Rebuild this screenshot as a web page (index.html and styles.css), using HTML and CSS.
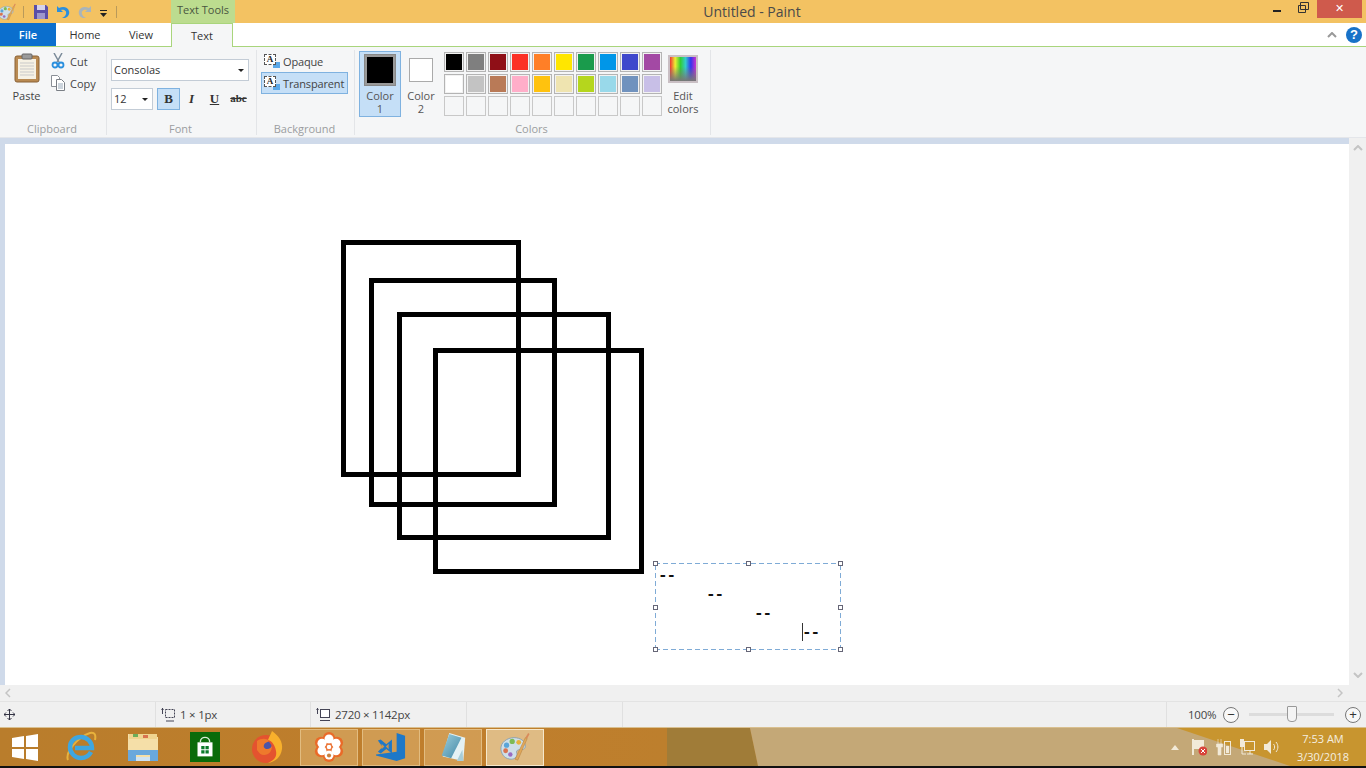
FILE: index.html
```html
<!DOCTYPE html>
<html lang="en">
<head>
<meta charset="utf-8">
<title>Untitled - Paint</title>
<link rel="stylesheet" href="styles.css">
</head>
<body>
<svg class="defs" width="0" height="0" aria-hidden="true">
  <symbol id="palette" viewBox="0 0 32 32">
    <path d="M1 19C0 11 8 6 15 6c7 0 12 4 12 9 0 4-4 4-7 4-2 0-3 2-2 4 1 3-2 6-6 6-6 0-10-4-11-10z" fill="#cfdfe8" stroke="#8ba2b2"/>
    <circle cx="7" cy="14" r="2.800" fill="#5aa5d8"/><circle cx="13" cy="10" r="2.800" fill="#7dbb55"/>
    <circle cx="20" cy="11" r="2.600" fill="#e8b23c"/><circle cx="6" cy="20" r="2.600" fill="#d9734f"/>
    <circle cx="11" cy="24" r="2.400" fill="#9a6cc0"/>
    <path d="M16 29L27 6l2 1-10 23z" fill="#e0a85a" stroke="#b07a3a" stroke-width=".5"/>
    <path d="M27 6l3-5 1.500 1-2.500 5z" fill="#d98a5a"/>
  </symbol>
</svg>

<header class="titlebar">
  <div class="qat">
    <svg class="qat-paint" viewBox="0 0 32 32"><use href="#palette"/></svg>
    <span class="qat-sep first"></span>
    <svg class="qat-btn" viewBox="0 0 14 14"><path d="M0 0h12l2 2v12H0z" fill="#5b4fa8"/><path d="M3 0h8v5H3z" fill="#d6d3ea"/><path d="M3 8h8v6H3z" fill="#9d97cc"/></svg>
    <svg class="qat-btn" viewBox="0 0 14 14"><path d="M1 1v6h6L5 5c3-1 6 1 5 4-.5 2-2 3-4 4h3c3-1 5-4 4-7-1-4-6-5-10-3z" fill="#2a8fde"/></svg>
    <svg class="qat-btn" viewBox="0 0 14 14"><path d="M13 1v6H7l2-2C6 4 3 6 4 9c.5 2 2 3 4 4H5C2 12 0 9 1 6c1-4 6-5 10-3z" fill="#a9b4bb"/></svg>
    <svg class="qat-drop" viewBox="0 0 7 7"><path d="M0 0h7v1H0zM0 3h7L3.500 7z" fill="#222"/></svg>
    <span class="qat-sep last"></span>
  </div>
  <div class="tools-label">Text Tools</div>
  <div class="wintitle">Untitled - Paint</div>
  <div class="winctl">
    <span class="ctl-min"></span>
    <svg class="ctl-max" viewBox="0 0 11 11"><path d="M2.500 .5h8v7h-8zM.5 3.500h7v7h-7z" fill="#f3c262" stroke="#333"/></svg>
    <span class="ctl-close">✕</span>
  </div>
</header>

<nav class="tabs">
  <span class="tab-file">File</span>
  <span class="tab tab-home">Home</span>
  <span class="tab tab-view">View</span>
  <span class="tab-text">Text</span>
  <span class="tabs-fill"></span>
  <svg class="collapse" viewBox="0 0 10 6"><path d="M1 5l4-4 4 4" fill="none" stroke="#999" stroke-width="2"/></svg>
  <span class="help">?</span>
</nav>

<section class="ribbon">
  <div class="group g-clip">
    <div class="body clip-body">
      <div class="paste">
        <svg class="paste-icon" viewBox="0 0 26 30"><rect x="1" y="3" width="24" height="26" rx="2" fill="#b98a52" stroke="#8a6236"/><rect x="4" y="6" width="18" height="20" fill="#f6f1e4"/><path d="M6 10h14M6 13h14M6 16h14M6 19h14M6 22h14" stroke="#c9c9c9"/><rect x="8" y="1" width="10" height="5" rx="1" fill="#9a9a9a" stroke="#666"/></svg>
        <span>Paste</span>
      </div>
      <div class="clip-side">
        <div class="clip-row">
          <svg class="clip-icon" viewBox="0 0 14 16"><path d="M3 0l5 9M11 0L6 9" stroke="#7a8a99" stroke-width="1.500"/><circle cx="4" cy="12" r="2.500" fill="none" stroke="#2a8fde" stroke-width="1.800"/><circle cx="10" cy="12" r="2.500" fill="none" stroke="#2a8fde" stroke-width="1.800"/></svg>
          <span>Cut</span>
        </div>
        <div class="clip-row">
          <svg class="clip-icon" viewBox="0 0 14 16"><path d="M.5.5h6l2 2v9h-8z" fill="#fff" stroke="#8a8f96"/><path d="M5.500 4.500h5l3 3v8h-8z" fill="#fff" stroke="#7a7f86"/><path d="M7 9h5M7 11h5M7 13h5" stroke="#9ab"/></svg>
          <span>Copy</span>
        </div>
      </div>
    </div>
    <div class="label">Clipboard</div>
  </div>

  <div class="group g-font">
    <div class="body font-body">
      <div class="combo combo-font"><span>Consolas</span><i class="caret"></i></div>
      <div class="font-row">
        <div class="combo combo-size"><span>12</span><i class="caret"></i></div>
        <span class="fbtn on serif-b">B</span>
        <span class="fbtn serif-i">I</span>
        <span class="fbtn serif-u">U</span>
        <span class="fbtn serif-s">abc</span>
      </div>
    </div>
    <div class="label">Font</div>
  </div>

  <div class="group g-bg">
    <div class="body bg-body">
      <div class="bg-row"><span class="bg-icon"><span class="bg-a">A</span></span><span>Opaque</span></div>
      <div class="bg-row on"><span class="bg-icon"><span class="bg-a">A</span></span><span>Transparent</span></div>
    </div>
    <div class="label">Background</div>
  </div>

  <div class="group g-colors">
    <div class="body colors-body">
      <div class="cbtn c1"><span class="swatch big"></span><span class="ctext">Color<br>1</span></div>
      <div class="cbtn c2"><span class="swatch small"></span><span class="ctext">Color<br>2</span></div>
      <div class="palette">
        <i style="--c:#000"></i><i style="--c:#7f7f7f"></i><i style="--c:#8f0f17"></i><i style="--c:#fb3026"></i><i style="--c:#ff7f27"></i><i style="--c:#ffe600"></i><i style="--c:#1a9b4c"></i><i style="--c:#0096e8"></i><i style="--c:#3f48cc"></i><i style="--c:#a349a4"></i>
        <i style="--c:#fff"></i><i style="--c:#c3c3c3"></i><i style="--c:#b97a57"></i><i style="--c:#ffaec9"></i><i style="--c:#ffc20e"></i><i style="--c:#efe4b0"></i><i style="--c:#b5d61d"></i><i style="--c:#99d9ea"></i><i style="--c:#7092be"></i><i style="--c:#c8bfe7"></i>
        <b></b><b></b><b></b><b></b><b></b><b></b><b></b><b></b><b></b><b></b>
      </div>
      <div class="cbtn edit"><span class="rainbow"></span><span class="ctext">Edit<br>colors</span></div>
    </div>
    <div class="label">Colors</div>
  </div>
</section>

<main class="workspace">
  <div class="canvas-wrap">
    <div class="canvas">
      <div class="sq s1"></div>
      <div class="sq s2"></div>
      <div class="sq s3"></div>
      <div class="sq s4"></div>
      <div class="textbox">
        <pre class="typed">--
	--
		--
			--</pre>
        <span class="cursor"></span>
        <i class="h tl"></i><i class="h tm"></i><i class="h tr"></i>
        <i class="h ml"></i><i class="h mr"></i>
        <i class="h bl"></i><i class="h bm"></i><i class="h br"></i>
      </div>
    </div>
  </div>
  <aside class="vscroll">
    <svg class="up" viewBox="0 0 10 6"><path d="M1 5l4-4 4 4" fill="none" stroke="#c4c4c4" stroke-width="2"/></svg>
    <svg class="up" viewBox="0 0 10 6"><path d="M1 1l4 4 4-4" fill="none" stroke="#c4c4c4" stroke-width="2"/></svg>
  </aside>
</main>

<div class="hscroll">
  <svg class="hs" viewBox="0 0 6 10"><path d="M5 1L1 5l4 4" fill="none" stroke="#c4c4c4" stroke-width="1.500"/></svg>
  <svg class="hs" viewBox="0 0 6 10"><path d="M1 1l4 4-4 4" fill="none" stroke="#c4c4c4" stroke-width="1.500"/></svg>
</div>

<footer class="status">
  <div class="cell c-pos"><svg class="move" viewBox="0 0 11 11"><path d="M5.500 0v11M0 5.500h11M3.500 2l2-2 2 2M3.500 9l2 2 2-2M2 3.500l-2 2 2 2M9 3.500l2 2-2 2" fill="none" stroke="#334"/></svg></div>
  <div class="cell c-sel"><svg class="dim" viewBox="0 0 14 14"><path d="M1.500 0v6" stroke="#445"/><path d="M0 2l1.500-2L3 2z" fill="#445"/><rect x="4.500" y="1.500" width="9" height="8" fill="none" stroke="#445" stroke-dasharray="2 1"/><path d="M5 13h8" stroke="#445"/></svg><span>1 × 1px</span></div>
  <div class="cell c-size"><svg class="dim" viewBox="0 0 14 14"><path d="M1.500 0v6" stroke="#445"/><path d="M0 2l1.500-2L3 2z" fill="#445"/><rect x="4.500" y="1.500" width="9" height="8" fill="#fff" stroke="#445"/><path d="M4 12.500h10" stroke="#445"/></svg><span>2720 × 1142px</span></div>
  <div class="cell c-a"></div>
  <div class="cell c-b"></div>
  <div class="zoombox">
    <span class="pct">100%</span>
    <span class="zbtn">−</span>
    <div class="slider"><i class="thumb"></i></div>
    <span class="zbtn">+</span>
  </div>
</footer>

<div class="taskbar">
  <svg class="wall" viewBox="0 0 1366 39" preserveAspectRatio="none">
    <defs>
      <linearGradient id="wallL" x1="0" x2="1" y1="0" y2="0"><stop offset="0" stop-color="#b97d2c"/><stop offset=".7" stop-color="#c07e2c"/><stop offset="1" stop-color="#bd7f2d"/></linearGradient>
    </defs>
    <rect x="0" y="0" width="667" height="39" fill="url(#wallL)"/>
    <polygon points="667,0 750,0 758,39 667,39" fill="#a07c38"/>
    <polygon points="750,0 1366,0 1366,39 758,39" fill="#c4a877"/>
    <polygon points="1177,0 1366,0 1366,39 1290,39" fill="#c8952f"/>
  </svg>
  <div class="slot start"><svg class="win" viewBox="0 0 26 27"><path d="M0 4l12-2v11H0zM14 2l12-2v13H14zM0 15h12v10L0 23zM14 15h12v12l-12-2z" fill="#fff"/></svg></div>
  <div class="slot"><svg class="ico-l" viewBox="0 0 32 32"><path d="M3 29C0 22 12 6 25 2c5-1 6 2 5 7" fill="none" stroke="#e8b23c" stroke-width="2"/><path d="M26 21c-2 4-6 6-10 6-6 0-11-5-11-11S10 6 16 6s11 5 11 11H10" fill="none" stroke="#3fa6e0" stroke-width="4.500"/></svg></div>
  <div class="slot"><svg class="ico-l" viewBox="0 0 32 32"><path d="M1 3h13l2 3h15v22H1z" fill="#f5dfa8"/><path d="M2 3h28v5H2z" fill="#efd48f"/><rect x="6" y="3" width="5" height="3" fill="#6cae5a"/><rect x="16" y="4" width="5" height="3" fill="#d9734f"/><path d="M1 19h30v11h-8v-6H9v6H1z" fill="#6aa8dc"/><rect x="9" y="26" width="14" height="4" fill="#cfe3f3"/></svg></div>
  <div class="slot"><svg class="ico" viewBox="0 0 32 32"><rect width="32" height="32" fill="#0a6b0a"/><path d="M8 11h16v15H8z" fill="#fff"/><path d="M11 11c0-7 10-7 10 0" fill="none" stroke="#d8ecd8" stroke-width="1.500"/><path d="M12 15h3.500v3.500H12zM16.500 15H20v3.500h-3.500zM12 19.500h3.500V23H12zM16.500 19.500H20V23h-3.500z" fill="#0a7a2a"/></svg></div>
  <div class="slot"><svg class="ico-l" viewBox="0 0 32 32"><circle cx="15" cy="18" r="14" fill="#e4532f"/><path d="M21 0c7 5 11 11 10 18-1 8-7 13-14 14 7-3 9-7 8-12-1-6-4-10-8-11 1-3 3-6 4-9z" fill="#f8b02c"/><circle cx="14" cy="16" r="6.500" fill="#4a55a8"/><path d="M6 10c4-3 10-3 12 0-2 2-4 1-5 4-1 2 1 4 3 4 3 0 4-2 5-3 0 5-3 9-8 9-3 0-5-2-7-5z" fill="#ee7a2c"/></svg></div>
  <div class="tbtn"><svg class="ico" viewBox="0 0 32 32"><g fill="#ea6a28"><circle cx="16" cy="16" r="11"/><circle cx="16" cy="6.500" r="6.500"/><circle cx="7.500" cy="11.500" r="6.500"/><circle cx="24.500" cy="11.500" r="6.500"/><circle cx="7.500" cy="20.500" r="6.500"/><circle cx="24.500" cy="20.500" r="6.500"/><circle cx="16" cy="25.500" r="6.500"/></g><g fill="#fff"><circle cx="16" cy="7.500" r="4.800"/><circle cx="8.500" cy="12" r="4.800"/><circle cx="23.500" cy="12" r="4.800"/><circle cx="8.500" cy="20" r="4.800"/><circle cx="23.500" cy="20" r="4.800"/><circle cx="16" cy="24.500" r="4.800"/></g><circle cx="16" cy="16" r="3" fill="#fff" stroke="#ea6a28"/><circle cx="16" cy="25" r="2.200" fill="#c8803e"/></svg></div>
  <div class="tbtn"><svg class="ico" viewBox="0 0 32 32"><path d="M22 1l9 3v24l-9 3L0 25v-1l22-3V5z" fill="#1e78c8"/><path d="M2 9l3-1 6 5 6-5v15l-6-5-6 5-3-2 5-5z" fill="#1e78c8"/><path d="M6 12.500v6l3-3zM13.500 12.500l-3 3 3 3z" fill="#c8954e"/></svg></div>
  <div class="tbtn"><svg class="ico" viewBox="0 0 32 32"><defs><linearGradient id="pad" x1="0" x2="1" y1="0" y2="1"><stop offset="0" stop-color="#9fd0dc"/><stop offset="1" stop-color="#3f86a6"/></linearGradient></defs><path d="M12 1l17 5-2 25-22-5z" fill="#e4f1f4"/><path d="M12 2l13 4-11 22-10-3z" fill="url(#pad)"/><path d="M20 31l6-12 1 12z" fill="#a8cdd8"/></svg></div>
  <div class="tbtn active"><svg class="ico" viewBox="0 0 32 32"><use href="#palette"/></svg></div>
  <div class="tray">
    <svg class="t-up" viewBox="0 0 8 5"><path d="M0 5l4-5 4 5z" fill="#f2ead8"/></svg>
    <svg class="t-i" viewBox="0 0 16 18"><path d="M2 1v16" stroke="#f2ead8" stroke-width="2"/><path d="M3 2h10v9H3z" fill="#f2ead8"/><circle cx="12" cy="13" r="4.500" fill="#d9433a"/><path d="M10 11l4 4M14 11l-4 4" stroke="#fff"/></svg>
    <svg class="t-i" viewBox="0 0 16 18"><path d="M3 1v5M6 1v5M1.500 6h6v3h-1.500v8h-3V9h-1.500z" fill="#f2ead8" stroke="#f2ead8" stroke-width=".6"/><rect x="9.500" y="3.500" width="6" height="13" fill="none" stroke="#f2ead8"/><rect x="11" y="8" width="3" height="7" fill="#f2ead8"/></svg>
    <svg class="t-i" viewBox="0 0 16 18"><rect x="5.500" y="3.500" width="10" height="9" fill="none" stroke="#f2ead8"/><path d="M8 16h6M11 12v4" stroke="#f2ead8"/><rect x="1" y="1" width="4" height="8" fill="#f2ead8"/><path d="M3 9v7h4" fill="none" stroke="#f2ead8"/></svg>
    <svg class="t-i" viewBox="0 0 16 18"><path d="M1 6h3l4-4v14l-4-4H1z" fill="#f2ead8"/><path d="M10.500 6c1.500 1.500 1.500 4.500 0 6M13 4c2.500 3 2.500 7 0 10" fill="none" stroke="#f2ead8"/></svg>
    <div class="clock"><span>7:53 AM</span><span>3/30/2018</span></div>
  </div>
</div>
</body>
</html>
```

FILE: styles.css
```css
* { box-sizing: border-box; }
html, body { margin: 0; padding: 0; }
body {
  width: 1366px;
  height: 768px;
  overflow: hidden;
  font-family: "Open Sans", "Noto Sans", sans-serif;
  font-size: 11px;
  color: #444;
  background: #fff;
  display: flex;
  flex-direction: column;
}
.defs { display: block; height: 0; }

/* title bar */
.titlebar { height: 23px; background: #f3c262; display: flex; flex: none; }
.qat { width: 171px; display: flex; align-items: center; flex: none; }
.qat-paint { width: 18px; height: 18px; margin-left: -2px; }
.qat-sep { width: 1px; height: 12px; background: #b99a5a; }
.qat-sep.first { margin-left: 7px; margin-right: 10px; }
.qat-sep.last { margin-left: 9px; }
.qat-btn { width: 14px; height: 14px; margin-right: 8px; }
.qat-drop { width: 7px; height: 7px; margin-top: 3px; }
.tools-label { width: 64px; flex: none; background: #bcdc8f; color: #49553f; text-align: center; line-height: 20px; font-size: 11px; }
.wintitle { flex: 1; text-align: center; font-size: 14px; line-height: 24px; color: #4a4a4a; }
.winctl { width: 97px; flex: none; height: 18px; display: flex; align-items: center; }
.ctl-min { width: 8px; height: 2px; background: #222; margin-left: 4px; margin-top: 3px; }
.ctl-max { width: 11px; height: 11px; margin-left: 17px; margin-top: -4px; }
.ctl-close { width: 45px; height: 18px; margin-left: 8px; background: #cf5a4c; color: #fff; text-align: center; font: bold 11px/18px "DejaVu Sans", sans-serif; }

/* tabs */
.tabs { height: 24px; flex: none; display: flex; background: #fff; border-bottom: 1px solid #a9d57c; align-items: center; color: #333; }
.tab-file { width: 56px; height: 23px; background: #0b6fce; color: #fff; text-align: center; line-height: 24px; font-weight: 600; }
.tab { text-align: center; line-height: 25px; }
.tab-home { width: 58px; }
.tab-view { width: 54px; margin-right: 3px; }
.tab-text { width: 62px; height: 24px; margin-bottom: -1px; background: #f5f6f7; border: 1px solid #a9d57c; border-bottom: 0; text-align: center; line-height: 24px; }
.tabs-fill { flex: 1; }
.collapse { width: 10px; height: 6px; margin-right: 9px; }
.help { width: 16px; height: 16px; border-radius: 50%; background: #1872c8; color: #fff; font: bold 13px/16px "Liberation Sans", sans-serif; text-align: center; margin-right: 4px; }

/* ribbon */
.ribbon { height: 91px; flex: none; display: flex; background: #f5f6f7; padding-top: 3px; border-bottom: 1px solid #e4e6ea; }
.group { display: flex; flex-direction: column; height: 85px; border-right: 1px solid #e3e5e8; flex: none; }
.g-clip { width: 107px; }
.g-font { width: 150px; }
.g-bg { width: 98px; }
.g-colors { width: 356px; }
.body { height: 71px; flex: none; }
.label { text-align: center; color: #9b9da0; line-height: 16px; padding-right: 2px; }

.clip-body { display: flex; padding-left: 10px; }
.paste { width: 33px; display: flex; flex-direction: column; align-items: center; }
.paste-icon { width: 26px; height: 30px; margin-top: 3px; }
.paste span { margin-top: 5px; line-height: 15px; }
.clip-side { margin-left: 8px; }
.clip-row { height: 22px; display: flex; align-items: center; gap: 5px; }
.clip-icon { width: 14px; height: 16px; }

.font-body { padding: 9px 0 0 4px; }
.combo { height: 22px; background: #fff; border: 1px solid #c3ccd6; display: flex; align-items: center; justify-content: space-between; padding: 0 4px 2px 2px; color: #333; }
.combo-font { width: 138px; }
.combo-size { width: 42px; }
.caret { width: 0; height: 0; border: 3px solid transparent; border-top: 3px solid #222; border-bottom: 0; margin-top: 2px; }
.font-row { display: flex; margin-top: 7px; }
.combo-size { margin-right: 4px; }
.fbtn { width: 23px; height: 22px; text-align: center; line-height: 21px; font-family: "Liberation Serif", serif; font-size: 13px; color: #333; font-weight: bold; }
.fbtn.on { background: #c5dff7; border: 1px solid #7fb2e0; line-height: 19px; }
.serif-i { font-style: italic; }
.serif-u { text-decoration: underline; }
.serif-s { text-decoration: line-through; font-size: 11px; margin-left: 1px; }

.bg-body { padding-left: 4px; }
.bg-row { height: 22px; width: 87px; display: flex; align-items: center; gap: 3px; padding-left: 2px; border: 1px solid transparent; letter-spacing: -.15px; }
.bg-row.on { background: #c5dff7; border-color: #7fb2e0; }
.bg-icon { width: 16px; height: 14px; flex: none; position: relative; background: linear-gradient(#5ba8e8, #5ba8e8) right bottom / 7px 6px no-repeat; }
.bg-a { display: block; width: 12px; height: 11px; background: #fff; border: 1px dashed #555; font: bold 9px/9px "Liberation Serif", serif; text-align: center; color: #222; }

.colors-body { display: flex; padding: 1px 0 0 4px; }
.cbtn { display: flex; flex-direction: column; align-items: center; flex: none; height: 66px; }
.c1 { width: 42px; background: #c5dff7; border: 1px solid #7fb2e0; }
.c2 { width: 40px; }
.edit { width: 40px; margin-left: 1px; }
.ctext { text-align: center; line-height: 13px; color: #555; }
.swatch { display: block; border: 1px solid #888; flex: none; }
.swatch.big { width: 32px; height: 32px; background: #000; box-shadow: inset 0 0 0 2px #999; margin-top: 2px; margin-bottom: 3px; }
.swatch.small { width: 24px; height: 24px; background: #fff; margin-top: 7px; margin-bottom: 7px; border-color: #aaa; }
.palette { display: grid; grid-template-columns: repeat(10, 20px); grid-auto-rows: 20px; gap: 2px; margin: 1px 0 0 3px; flex: none; align-content: start; }
.palette i { display: block; border: 1px solid #b4b4b4; background: var(--c); box-shadow: inset 0 0 0 1px #f2f2f2; }
.palette b { display: block; border: 1px solid #c8c8c8; background: #f5f6f7; }
.rainbow { width: 30px; height: 28px; margin-top: 4px; margin-bottom: 6px; flex: none; border: 2px solid #c9bfc4; background: linear-gradient(to bottom, transparent 40%, #777), linear-gradient(to right, #e33, #ee3, #3c3, #3cc, #33e, #c3c); }

/* canvas */
.workspace { height: 547px; flex: none; display: flex; }
.canvas-wrap { width: 1349px; flex: none; background: #cfdaea; padding: 6px 0 0 5px; }
.canvas { height: 541px; background: #fff; position: relative; }
.vscroll { flex: 1; background: #f0f0f0; display: flex; flex-direction: column; align-items: center; justify-content: space-between; padding: 7px 0 7px; }
.up { width: 10px; height: 6px; }
.sq { position: absolute; border: 5px solid #000; }
.s1 { left: 336px; top: 96px; width: 180px; height: 237px; }
.s2 { left: 364px; top: 134px; width: 188px; height: 229px; }
.s3 { left: 392px; top: 168px; width: 214px; height: 228px; }
.s4 { left: 428px; top: 204px; width: 211px; height: 226px; }
.textbox {
  position: absolute; left: 650px; top: 419px; width: 186px; height: 87px;
  background:
    repeating-linear-gradient(90deg, #7fabd6 0 5px, transparent 5px 8px) left top / 100% 1px no-repeat,
    repeating-linear-gradient(90deg, #7fabd6 0 5px, transparent 5px 8px) left bottom / 100% 1px no-repeat,
    repeating-linear-gradient(0deg, #7fabd6 0 5px, transparent 5px 8px) left top / 1px 100% no-repeat,
    repeating-linear-gradient(0deg, #7fabd6 0 5px, transparent 5px 8px) right top / 1px 100% no-repeat;
}
.typed { margin: 0; padding: 4px 0 0 3px; font: bold 16px/19px "Liberation Mono", monospace; color: #111; tab-size: 48px; letter-spacing: -1px; }
.cursor { position: absolute; left: 147px; top: 60px; width: 1px; height: 18px; background: #333; }
.h { position: absolute; width: 5px; height: 5px; background: #fff; border: 1px solid #667; }
.tl { left: -2px; top: -2px; } .tm { left: 91px; top: -2px; } .tr { left: 183px; top: -2px; }
.ml { left: -2px; top: 42px; } .mr { left: 183px; top: 42px; }
.bl { left: -2px; top: 84px; } .bm { left: 91px; top: 84px; } .br { left: 183px; top: 84px; }

/* scrollbar + status */
.hscroll { height: 17px; flex: none; background: #f0f0f0; display: flex; justify-content: space-between; align-items: center; padding: 0 23px 0 5px; border-bottom: 1px solid #e3e3e3; }
.hs { width: 6px; height: 10px; }
.status { height: 25px; flex: none; background: #f0f0f0; display: flex; align-items: center; color: #444; font-size: 11.500px; letter-spacing: -.25px; }
.cell { height: 25px; display: flex; align-items: center; border-right: 1px solid #e0e0e0; flex: none; }
.c-pos { width: 156px; padding-left: 4px; }
.c-sel { width: 155px; padding-left: 5px; gap: 5px; }
.c-size { width: 156px; padding-left: 5px; gap: 5px; }
.c-a { width: 156px; }
.c-b { width: 544px; }
.move { width: 11px; height: 11px; }
.dim { width: 14px; height: 14px; }
.zoombox { flex: 1; display: flex; align-items: center; padding-left: 21px; }
.pct { width: 28px; }
.zbtn { width: 16px; height: 16px; border-radius: 50%; border: 1px solid #777; font: 13px/13px "Liberation Sans", sans-serif; text-align: center; margin-left: 7px; color: #333; background: #f8f8f8; flex: none; }
.slider { width: 85px; height: 3px; background: #dcdcdc; margin-left: 10px; margin-right: 4px; position: relative; }
.thumb { position: absolute; left: 38px; top: -7px; width: 10px; height: 16px; background: #f4f4f4; border: 1px solid #999; border-radius: 1px 1px 4px 4px; }

/* taskbar */
.taskbar { flex: 1; background: #bc7f2c; border-top: 1px solid #d9c090; border-bottom: 2px solid #111; display: flex; align-items: center; position: relative; }
.wall { position: absolute; left: 0; top: 0; width: 1366px; height: 100%; }
.slot { width: 62px; display: flex; justify-content: center; flex: none; position: relative; }
.slot.start { width: 50px; }
.win { width: 26px; height: 27px; }
.ico { width: 30px; height: 30px; }
.ico-l { width: 32px; height: 32px; }
.tbtn { width: 58px; height: 37px; margin-right: 4px; background: rgba(235, 200, 140, .4); border: 1px solid rgba(240, 215, 165, .55); display: flex; align-items: center; justify-content: center; flex: none; position: relative; }
.tbtn:nth-of-type(6) { margin-left: 2px; }
.tbtn.active { background: rgba(240, 220, 180, .65); border-color: rgba(250, 240, 215, .85); }
.tray { margin-left: auto; display: flex; align-items: center; position: relative; padding-right: 9px; }
.t-up { width: 8px; height: 5px; margin-right: 12px; }
.t-i { width: 16px; height: 18px; margin-right: 8px; }
.clock { width: 68px; margin-left: 2px; padding-top: 2px; display: flex; flex-direction: column; align-items: center; color: #f5efe0; font-size: 11px; line-height: 18px; }
```
